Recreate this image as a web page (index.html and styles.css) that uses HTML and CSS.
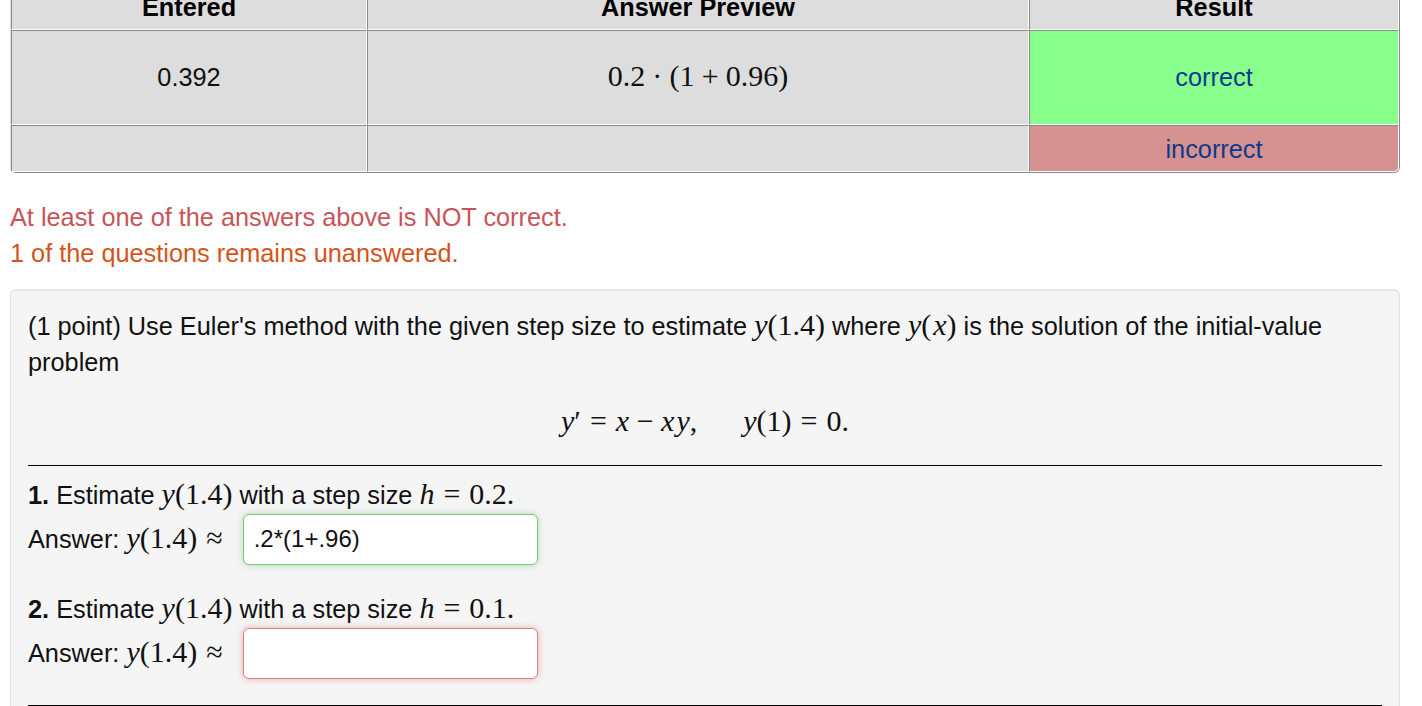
FILE: index.html
```html
<!DOCTYPE html>
<html lang="en">
<head>
    <meta charset="UTF-8">
    <meta name="viewport" content="width=device-width, initial-scale=1.0">
    <title>Euler's Method</title>
    <link rel="stylesheet" href="styles.css">
</head>
<body>
    <div class="page">
        <table class="results">
            <tr>
                <th class="col-entered">Entered</th>
                <th class="col-preview">Answer Preview</th>
                <th>Result</th>
            </tr>
            <tr class="tall">
                <td>0.392</td>
                <td><span class="m preview">0.2<span class="bin">&middot;</span>(1<span class="bin">+</span>0.96)</span></td>
                <td class="correct">correct</td>
            </tr>
            <tr>
                <td></td>
                <td></td>
                <td class="incorrect">incorrect</td>
            </tr>
        </table>

        <div class="msg-error">At least one of the answers above is NOT correct.</div>
        <div class="msg-warn">1 of the questions remains unanswered.</div>

        <div class="problem">
            <p>(1 point) Use Euler's method with the given step size to estimate <span class="m"><i>y</i>(1.4)</span> where <span class="m"><i>y</i>(<i>x</i>)</span> is the solution of the initial-value problem</p>

            <div class="display m"><i>y</i>&prime;<span class="rel">=</span><i>x</i><span class="bin">&minus;</span><i>x</i><i>y</i>,<span class="quad"></span><i>y</i>(1)<span class="rel">=</span>0.</div>

            <hr>

            <div class="part">
                <div><b>1.</b> Estimate <span class="m"><i>y</i>(1.4)</span> with a step size <span class="m"><i>h</i><span class="rel">=</span>0.2.</span></div>
                <div class="answer-row">
                    <span>Answer: <span class="m"><i>y</i>(1.4)<span class="rel approx">&asymp;</span></span></span>
                    <input type="text" class="answer good" value=".2*(1+.96)">
                </div>
            </div>

            <div class="part">
                <div><b>2.</b> Estimate <span class="m"><i>y</i>(1.4)</span> with a step size <span class="m"><i>h</i><span class="rel">=</span>0.1.</span></div>
                <div class="answer-row">
                    <span>Answer: <span class="m"><i>y</i>(1.4)<span class="rel approx">&asymp;</span></span></span>
                    <input type="text" class="answer bad" value="">
                </div>
            </div>

            <hr>
        </div>
    </div>
</body>
</html>
```

FILE: styles.css
```css
body {
    margin: 0;
    padding: 0;
    background: #ffffff;
    color: #111111;
    font-family: "Liberation Sans", Arial, sans-serif;
    font-size: 25.3px;
    line-height: 36px;
}

.page {
    padding: 0 22px 0 10px;
}

/* math bits, MathJax-like */
.m {
    font-family: "Liberation Serif", "Times New Roman", serif;
    font-size: 30px;
    line-height: 1;
    white-space: nowrap;
}

.m i {
    font-style: italic;
}

.m i + i {
    margin-left: 2px;
}

.m .rel {
    margin: 0 0.3em;
}

.m .approx {
    margin-right: 0;
}

.m .bin {
    margin: 0 0.25em;
}

.m.preview .bin {
    margin: 0 0.24em;
}

/* results table */
.results {
    width: 1390px;
    margin-top: -17px;
    table-layout: fixed;
    border-spacing: 0;
    border: 1px solid;
    border-color: #dddddd #8a8a8a #8a8a8a #dddddd;
    border-radius: 0 0 6px 6px;
}

.results th,
.results td {
    box-sizing: border-box;
    padding: 4px;
    text-align: center;
    background: #dddddd;
    border-top: 1px solid #8a8a8a;
    border-left: 1px solid #8a8a8a;
    border-bottom: 1px solid #ffffff;
    border-right: 1px solid #ffffff;
}

.results th {
    font-weight: bold;
    color: #000000;
}

.results .col-entered {
    width: 356px;
}

.results .col-preview {
    width: 662px;
}

.results .tall td {
    padding-top: 28px;
    padding-bottom: 29px;
}

.results .correct {
    background: #88ff8c;
    color: #0d3a8c;
}

.results .incorrect {
    padding-top: 5px;
    padding-bottom: 4px;
    background: #d69191;
    color: #0d3a8c;
    border-bottom-right-radius: 5px;
}

/* messages */
.msg-error {
    margin-top: 26px;
    color: #c8545a;
}

.msg-warn {
    color: #d4541c;
}

/* problem well */
.problem {
    margin-top: 18px;
    padding: 18px 17px 40px;
    background: #f5f5f5;
    border: 1px solid #e3e3e3;
    border-radius: 6px;
    box-shadow: inset 0 1px 1px rgba(0, 0, 0, 0.05);
}

.problem p {
    margin: 0;
}

.problem .display {
    display: block;
    margin: 23px 0 26px;
    line-height: 36px;
    text-align: center;
}

.quad {
    display: inline-block;
    width: 46px;
}

.problem hr {
    margin: 0 0 11px;
    border: none;
    border-top: 1px solid #000000;
}

.part {
    margin-bottom: 26px;
}

.answer-row {
    display: flex;
    align-items: center;
    gap: 20px;
    height: 52px;
}

.answer {
    box-sizing: border-box;
    width: 295px;
    height: 51px;
    padding: 0 10px;
    background: #ffffff;
    font-family: "Liberation Sans", Arial, sans-serif;
    font-size: 24px;
    color: #111111;
    border: 1px solid #cccccc;
    border-radius: 6px;
    outline: none;
}

.answer.good {
    border-color: #7fc47f;
    box-shadow: 0 0 7px rgba(92, 184, 92, 0.45);
}

.answer.bad {
    border-color: #e07f7f;
    box-shadow: 0 0 7px rgba(217, 83, 79, 0.45);
}
```
